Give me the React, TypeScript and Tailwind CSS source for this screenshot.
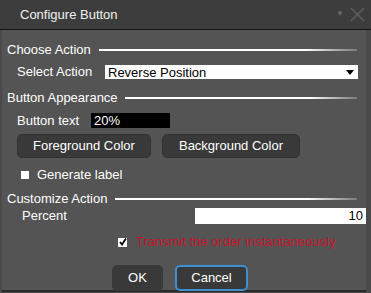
import React from 'react';

const Rule: React.FC<{ className?: string }> = ({ className = '' }) => (
  <div className={`flex-1 h-[2px] bg-gradient-to-r from-white via-white via-80% to-[#7a7a7a] ${className}`} />
);

const App: React.FC = () => {
  return (
    <div className="w-[371px] h-[293px] bg-[#4a4a4a] text-[13px] text-white overflow-hidden" style={{ fontFamily: '"Liberation Sans", Arial, sans-serif' }}>
      <div className="h-[30px] bg-[#3d3d3d] border-b border-[#151515] flex items-center pl-[20px] pr-[5px]">
        <span className="text-[#f0f0f0]">Configure Button</span>
        <span className="ml-auto text-[8px] text-[#6a6a6a] mr-[6px] mt-[-2px]">▼</span>
        <svg width="15" height="15" viewBox="0 0 15 15" className="mr-[1px]">
          <path d="M1 1 L14 14 M14 1 L1 14" stroke="#5c5c5c" strokeWidth="1.6" />
        </svg>
      </div>

      <div className="h-[262px] ml-[2px] mr-[5px] bg-[#545454] border-b-[2px] border-[#2c2c2c] pt-[11px] pl-[5px] flex flex-col">
        <div className="h-[18px] flex items-center">
          <span>Choose Action</span>
          <Rule className="ml-[8px] mr-[9px]" />
        </div>

        <div className="h-[18px] mt-[4px] flex items-center pl-[10px]">
          <span className="w-[88px]">Select Action</span>
          <div className="w-[253px] h-[14px] bg-white text-black flex items-center pl-[3px] pr-[4px]">
            <span className="leading-none">Reverse Position</span>
            <svg width="8" height="5" viewBox="0 0 8 5" className="ml-auto mt-[1px]">
              <path d="M0 0 H8 L4 5 Z" fill="#000" />
            </svg>
          </div>
        </div>

        <div className="h-[18px] mt-[8px] flex items-center">
          <span>Button Appearance</span>
          <Rule className="ml-[7px] mr-[9px]" />
        </div>

        <div className="h-[19px] mt-[4px] flex items-center pl-[10px]">
          <span className="w-[74px]">Button text</span>
          <div className="w-[79px] h-[15px] bg-black flex items-center pl-[3px] leading-none">20%</div>
        </div>

        <div className="h-[24px] mt-[4px] flex items-center pl-[10px] gap-[11px]">
          <button className="w-[134px] h-[24px] rounded-[5px] bg-[#393939] border border-[#333] text-white">Foreground Color</button>
          <button className="w-[138px] h-[24px] rounded-[5px] bg-[#393939] border border-[#333] text-white">Background Color</button>
        </div>

        <div className="h-[16px] mt-[9px] flex items-center pl-[14px]">
          <div className="w-[8px] h-[8px] bg-white" />
          <span className="ml-[8px]">Generate label</span>
        </div>

        <div className="h-[18px] mt-[7px] flex items-center">
          <span>Customize Action</span>
          <Rule className="ml-[8px] mr-[9px]" />
        </div>

        <div className="h-[16px] flex items-center pl-[15px]">
          <span>Percent</span>
          <div className="ml-auto w-[171px] h-[16px] bg-white text-black flex items-center justify-end pr-[3px]">10</div>
        </div>

        <div className="h-[16px] mt-[10px] flex items-center pl-[111px]">
          <div className="w-[9px] h-[9px] bg-white flex items-center justify-center">
            <svg width="8" height="8" viewBox="0 0 8 8">
              <path d="M1 4 L3 6.5 L7 0.5" stroke="#000" strokeWidth="1.8" fill="none" />
            </svg>
          </div>
          <span className="ml-[9px] text-[#c8142c]">Transmit the order instantaneously</span>
        </div>

        <div className="h-[26px] mt-[15px] flex items-center pl-[105px] gap-[12px]">
          <button className="w-[51px] h-[26px] rounded-[5px] bg-[#393939] text-white">OK</button>
          <button className="w-[73px] h-[26px] rounded-[5px] bg-[#393939] border-2 border-[#3d8fd1] text-white">Cancel</button>
        </div>
      </div>
    </div>
  );
};

export default App;
